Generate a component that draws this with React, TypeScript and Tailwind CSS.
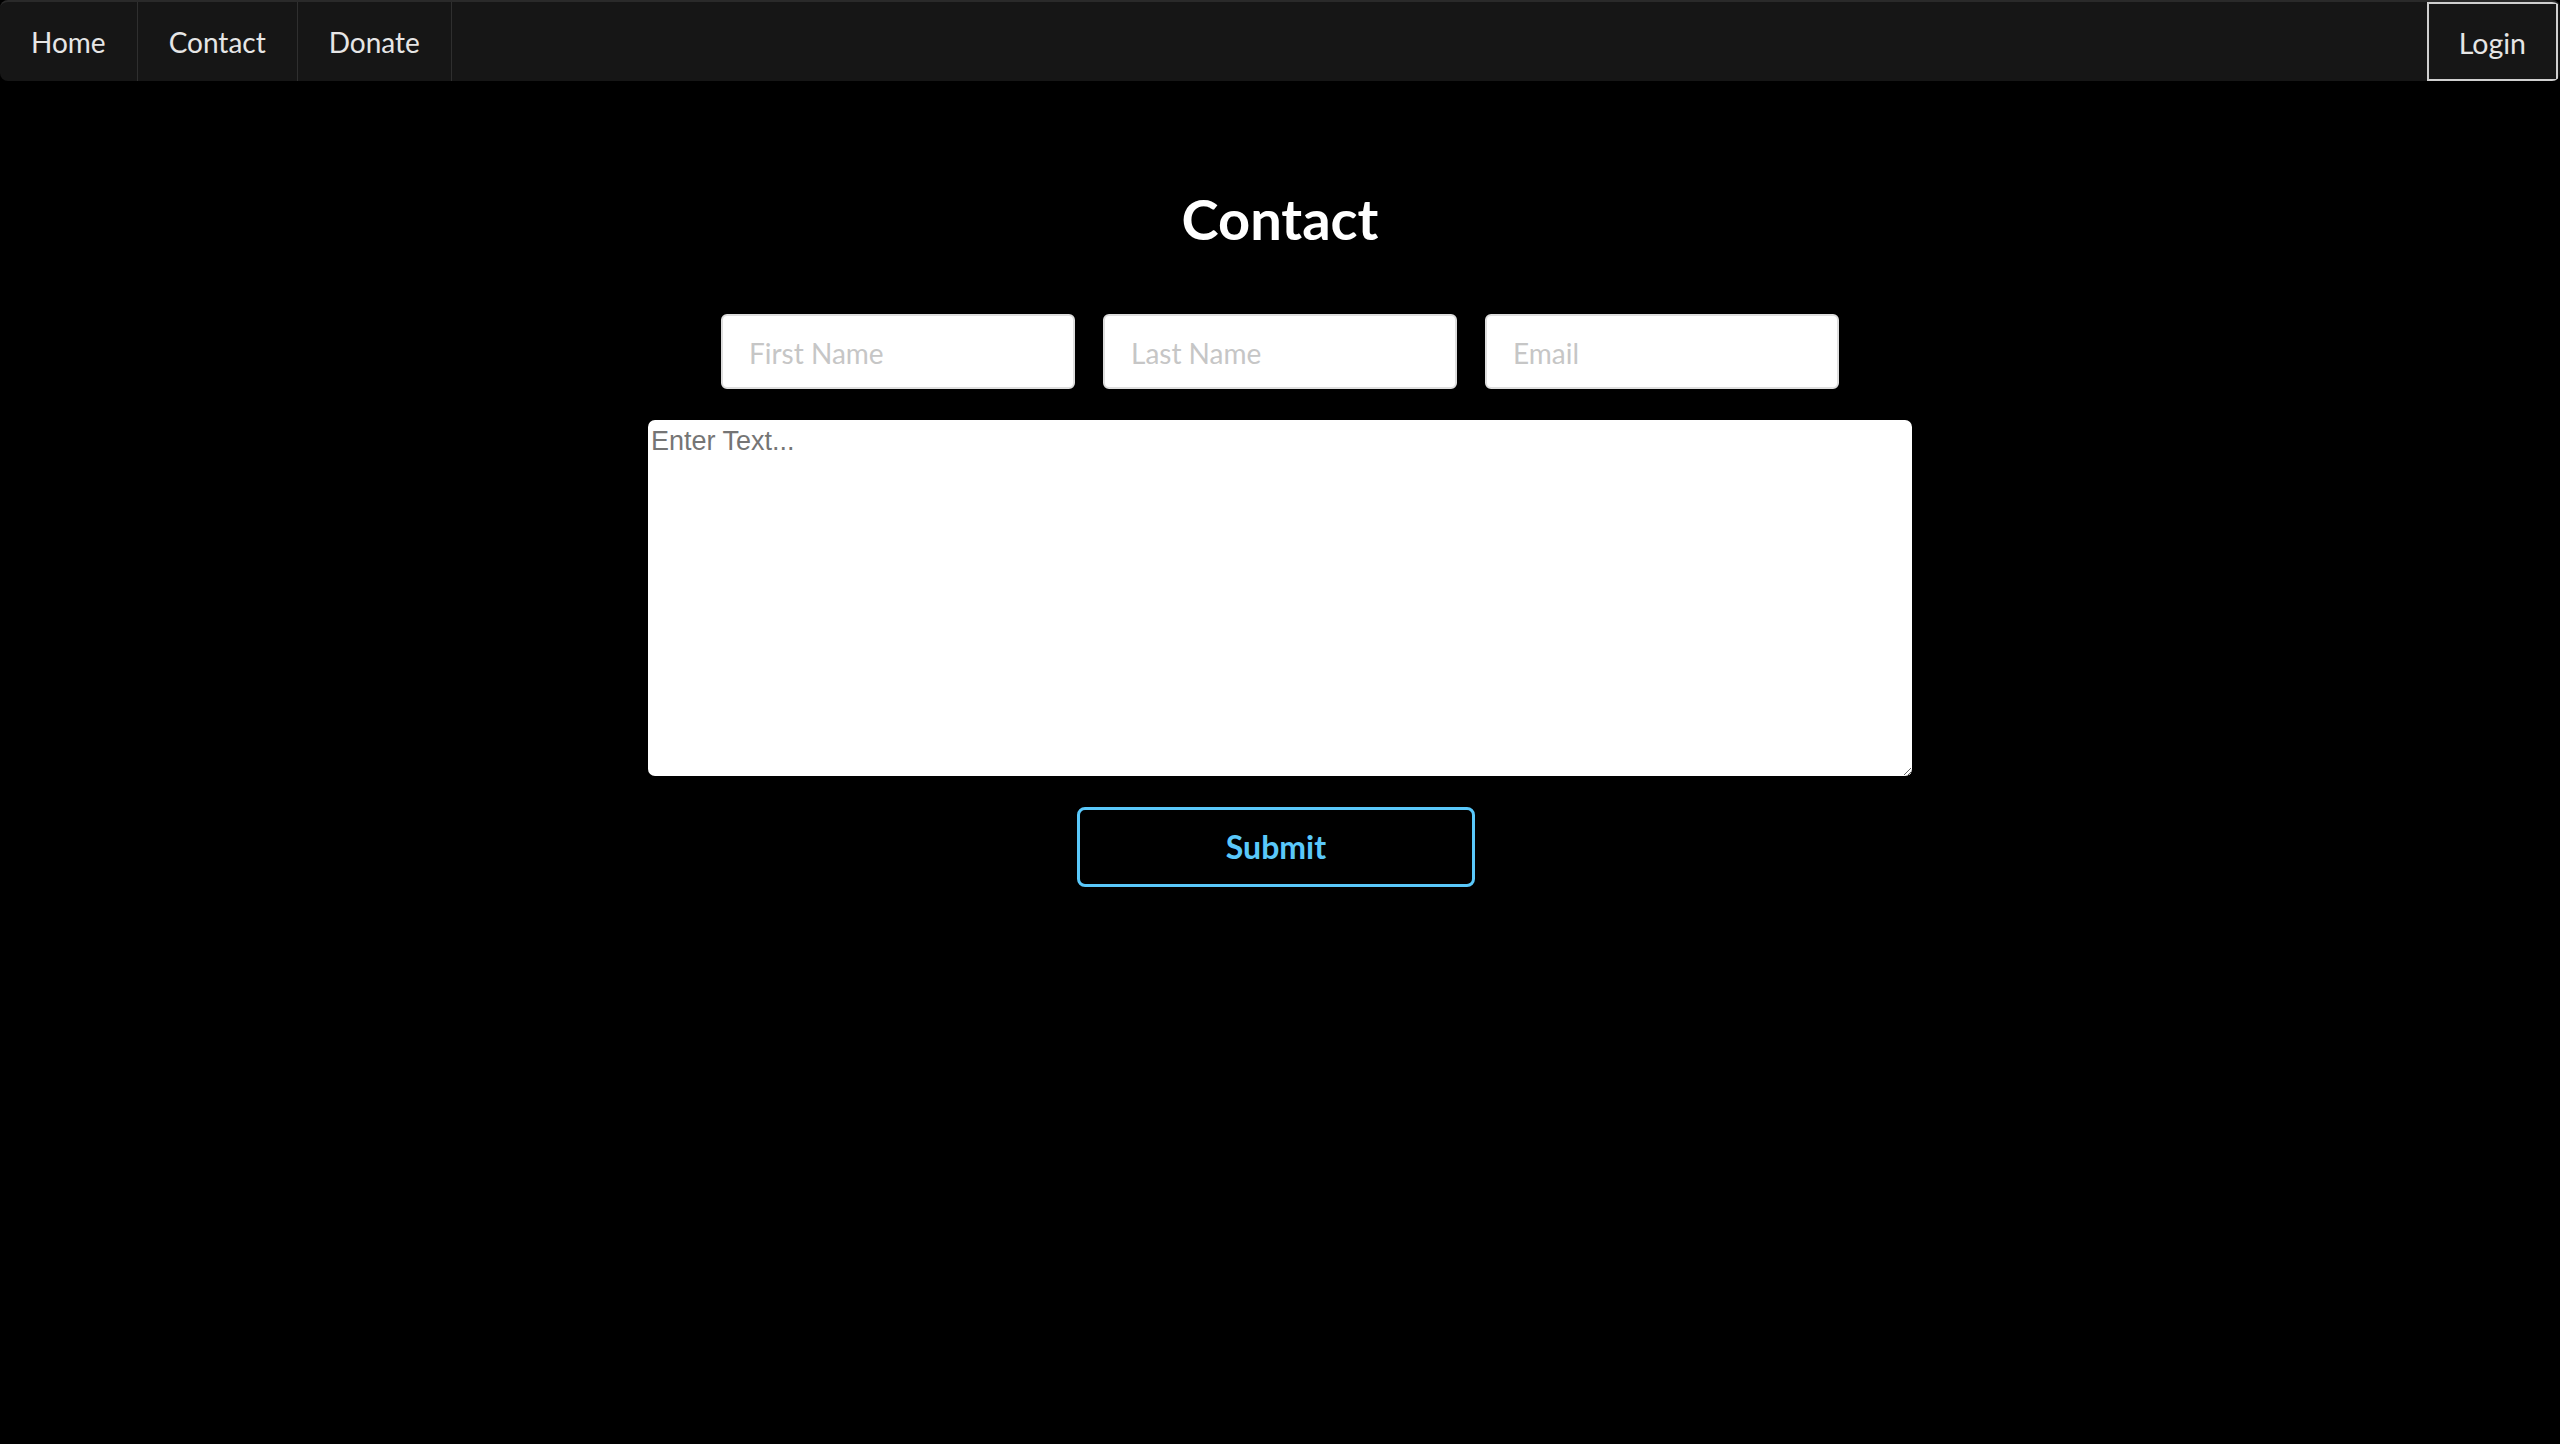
import React from "react";

export default function App() {
  return (
    <div
      className="min-h-screen w-full bg-black"
      style={{ fontFamily: "Lato, 'Noto Sans', sans-serif" }}
    >
      <nav className="flex h-[81px] justify-between overflow-hidden rounded-lg border-t-2 border-[#2a2a2a] bg-[#161616]">
        <div className="flex">
          {["Home", "Contact", "Donate"].map((item) => (
            <a
              key={item}
              href="#"
              className="flex items-center border-r border-[#2f2f2f] px-[31px] text-[28px] text-[#e6e6e6]"
            >
              {item}
            </a>
          ))}
        </div>
        <button className="mr-[2px] flex items-center border-2 border-[#cfcfcf] bg-[#161616] px-[30px] pt-[3px] text-[28.5px] text-[#e6e6e6]">
          Login
        </button>
      </nav>

      <main className="flex flex-col items-center pt-[110px]">
        <h1 className="text-[56px] font-bold leading-none text-white">Contact</h1>

        <div className="mt-[67px] flex gap-[28px]">
          {["First Name", "Last Name", "Email"].map((p) => (
            <input
              key={p}
              placeholder={p}
              className="h-[75px] w-[354px] rounded-[6px] border-2 border-[#dedede] bg-white pl-[26px] pt-[2px] text-[28px] text-black outline-none placeholder:text-[#c6c6c6]"
              style={{ fontFamily: "Lato, sans-serif" }}
            />
          ))}
        </div>

        <textarea
          placeholder="Enter Text..."
          className="mt-[31px] h-[356px] w-[1264px] rounded-[7px] bg-white pl-[3px] pt-[1px] text-[27px] text-black outline-none placeholder:text-[#757575]"
          style={{ fontFamily: "'Liberation Sans', Arial, sans-serif" }}
        />

        <div className="mt-[31px] flex justify-center pr-[8px]">
          <button className="h-[80px] w-[398px] rounded-[8px] border-[3px] border-[#5ac8fa] bg-black text-[32px] font-bold text-[#5ac8fa]">
            Submit
          </button>
        </div>
      </main>
    </div>
  );
}
